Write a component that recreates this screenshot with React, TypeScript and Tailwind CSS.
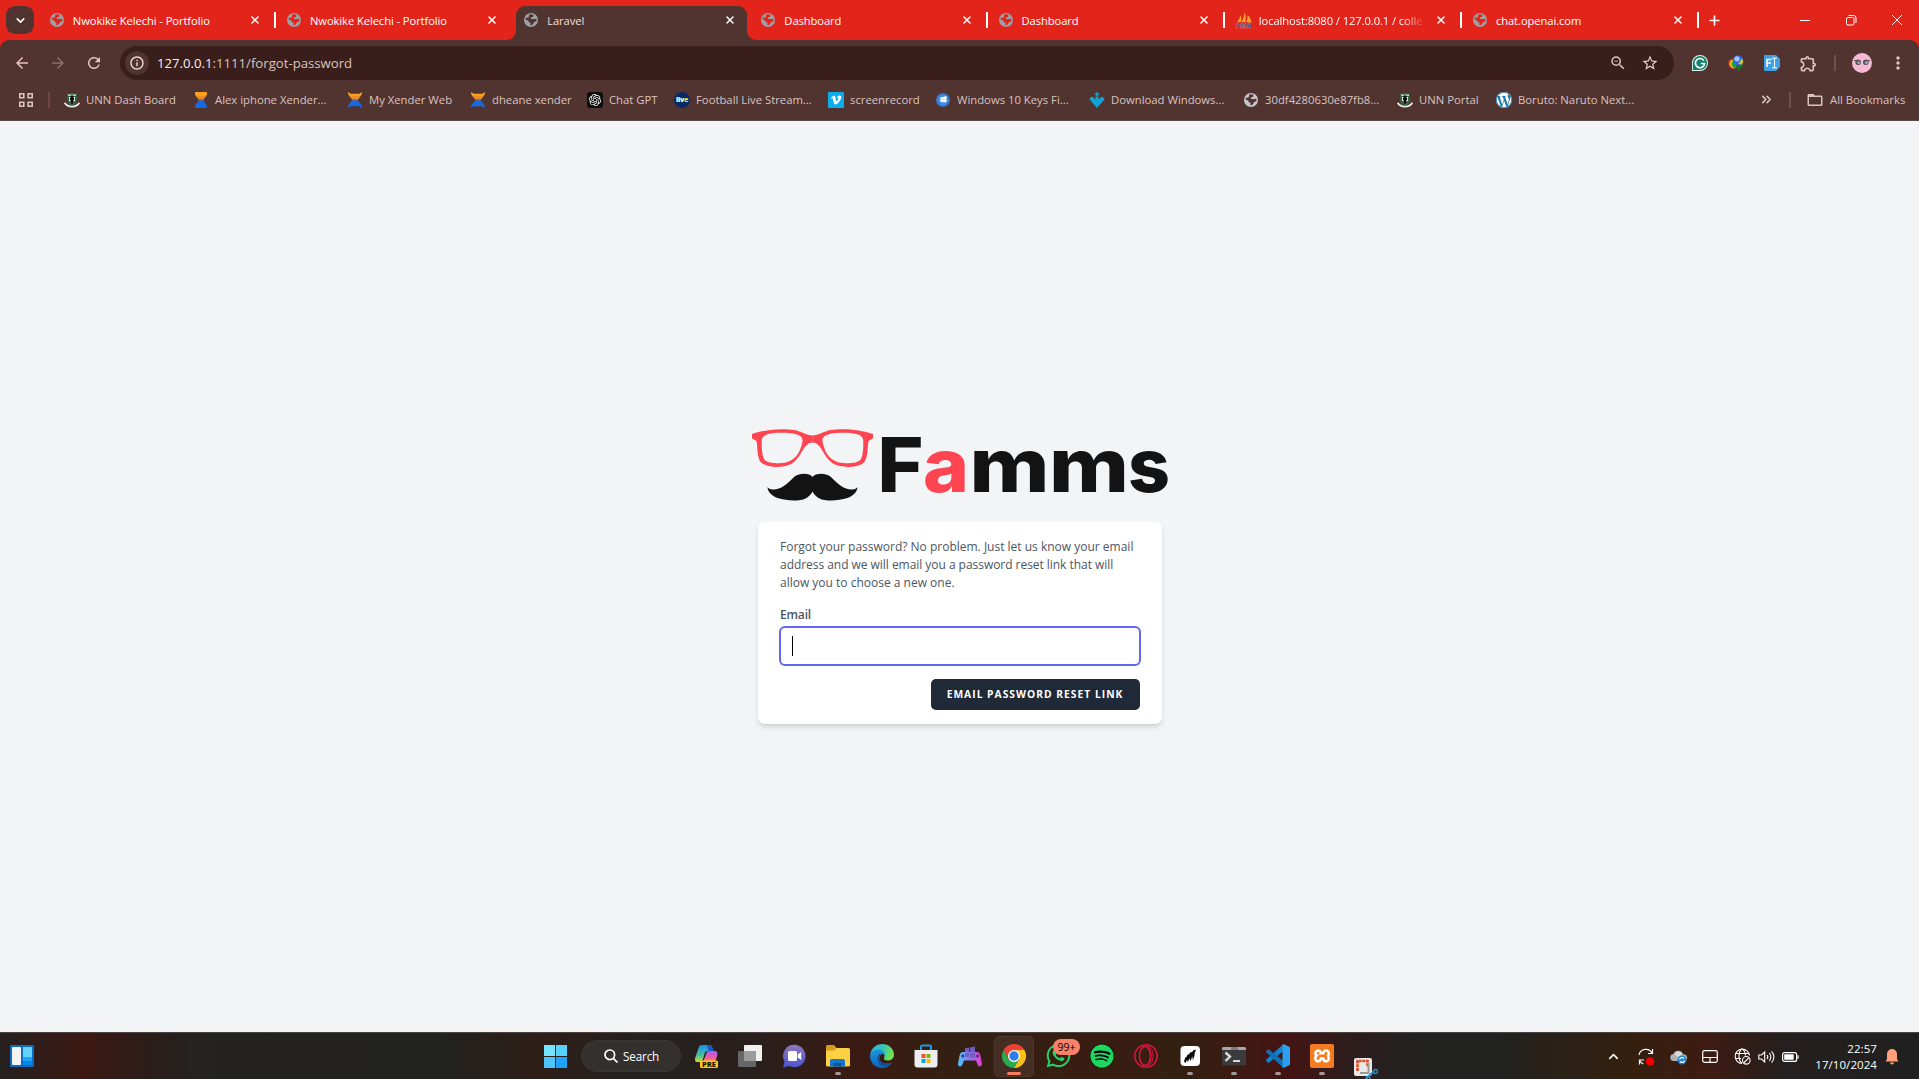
import React from "react";
import {
  MdArrowBack,
  MdArrowForward,
  MdRefresh,
  MdInfoOutline,
  MdStarOutline,
  MdZoomOut,
  MdOutlineExtension,
  MdMoreVert,
  MdFolderOpen,
} from "react-icons/md";
import { SiOpenai, SiXampp, SiWordpress } from "react-icons/si";
import { FaWhatsapp, FaSpotify, FaVimeoV, FaWindows } from "react-icons/fa";
import { ChevronDown, ChevronUp, ChevronsRight, X, Plus } from "lucide-react";

/* ---------- favicons ---------- */

function Globe({ land, fill = "#9aa0a6" }: { land: string; fill?: string }) {
  return (
    <svg viewBox="0 0 14 14" className="size-[14px] shrink-0">
      <circle cx="7" cy="7" r="7" fill={fill} />
      <path
        d="M5.2 1.4 8.3 1.2 9.6 2.4 8.9 3.9 6.9 4.5 6.6 5.6 8.8 6.3 12.3 5.7 12.5 8.2 10.4 8.7 9.3 10.6 7.3 12.4 6.2 11.6 6.6 9.8 4.6 8.9 4.3 7.4 1.6 6.4 2.1 4.3 3.9 4.9 5 3.6Z"
        fill={land}
      />
      <path d="M6.6 4.8 9.6 4 11.6 4.3 10.6 5.4 8.4 5.3Z" fill={fill} />
    </svg>
  );
}

function Crest() {
  return (
    <svg viewBox="0 0 16 16" className="size-4">
      <path d="M3.2 1.500h9.600v6.500c0 3-2 4.500-4.800 5.500-2.800-1-4.800-2.500-4.800-5.500z" fill="#2f6b45" />
      <path d="M4 2.500h8v1.500H4z" fill="#c9d6cb" />
      <path d="M5 5h2l1 1 1-1h2v4H9.800v2H6.200V9H5z" fill="#f0f0f0" />
      <path d="M6.500 3.500h3v2.200l1 1.300-1.200 1.200.5 2.300L8 12l-1.800-1.500.5-2.300L5.500 7l1-1.300z" fill="#0c0c0c" />
      <path d="M.6 10.800c1.800 2.900 4 3.800 7.400 3.800s5.600-.9 7.400-3.800" fill="none" stroke="#e9ece9" strokeWidth="1.700" />
    </svg>
  );
}

function Hourglass({ tail = false }: { tail?: boolean }) {
  return (
    <svg viewBox="0 0 16 16" className="size-4">
      <path d={tail ? "M.8 0 4 1.800h8L15.200 0c-.2 3.600-3 6-5 8H6C4 6 1 3.600.8 0z" : "M2 0h12v2.600L10 8H6L2 2.600z"} fill="#f9a11b" />
      <path d="M3 4h10L9.800 8H6.200z" fill="#e98a2b" />
      <path d={tail ? "M6 8h4c2 2 5 4.400 5.200 8L12 14.200H4L.8 16C1 12.400 4 10 6 8z" : "M6 8h4l4 5.400V16H2v-2.600z"} fill="#1668e3" />
      <path d="M6.200 7.200h3.600L11 9.600H5z" fill="#4b6aa5" />
    </svg>
  );
}

function LiveBadge() {
  return (
    <span className="flex size-4 items-center justify-center rounded-full bg-[#0a2a66] font-['Open_Sans'] text-[7px] font-extrabold leading-none tracking-[-0.3px] text-white">
      liv<span className="text-[#d8e04a]">e</span>
    </span>
  );
}

function PmaIcon() {
  return (
    <svg viewBox="0 0 16 16" className="size-4 shrink-0 overflow-visible">
      <path d="M1 10C3 8 4 5 4.500 3c1 2 1 5 .5 7zM5.500 10C7.500 7 8 4 8.500 0c1.500 3 1.500 7 .8 10zM10 10c1.300-2 1.500-4 1.700-7C14 5 15 8 15.500 10.500z" fill="#f7a52c" />
      <text x="0" y="15.600" textLength="15.500" lengthAdjust="spacingAndGlyphs" fontFamily="Open Sans, sans-serif" fontWeight="800" fontStyle="italic" fontSize="6.500" fill="#3b3f77" stroke="#c9a0a8" strokeWidth=".3">PMA</text>
    </svg>
  );
}

function DownArrows() {
  return (
    <svg viewBox="0 0 16 16" className="size-4" fill="#12a4d4">
      <path d="M8 0 10.300 2.300 8 4.600 5.700 2.300z" />
      <path d="M6.500 4.500h3v3l2-2 1.700-1 2.600 2.500L8 16 .2 7 2.800 4.500l1.700 1 2 2z" />
    </svg>
  );
}

/* ---------- tab strip ---------- */

type TabInfo = { title: string; active?: boolean; sep?: boolean; pma?: boolean };

const tabs: TabInfo[] = [
  { title: "Nwokike Kelechi - Portfolio", sep: true },
  { title: "Nwokike Kelechi - Portfolio" },
  { title: "Laravel", active: true },
  { title: "Dashboard", sep: true },
  { title: "Dashboard", sep: true },
  { title: "localhost:8080 / 127.0.0.1 / colle", sep: true, pma: true },
  { title: "chat.openai.com", sep: true },
];

function Tab({ tab }: { tab: TabInfo }) {
  return (
    <div className="relative flex h-10 w-[237.2px] shrink-0 items-center pl-[10.800px] pr-[15px]">
      {tab.active && (
        <div className="absolute bottom-0 left-[2.500px] right-[3.500px] top-[6px] rounded-t-[9px] bg-[#51332f]">
          <svg viewBox="0 0 10 10" className="absolute -left-[10px] bottom-0 size-[10px]">
            <path d="M10 0v10H0C6 10 10 6 10 0z" fill="#51332f" />
          </svg>
          <svg viewBox="0 0 10 10" className="absolute -right-[10px] bottom-0 size-[10px]">
            <path d="M0 0v10h10C4 10 0 6 0 0z" fill="#51332f" />
          </svg>
        </div>
      )}
      <div className="relative flex w-full items-center">
        {tab.pma ? <PmaIcon /> : <Globe land={tab.active ? "#51332f" : "#e3241b"} />}
        <span
          className={`${tab.pma ? "ml-[7px] w-[168px] [mask-image:linear-gradient(90deg,#000_86%,transparent_99%)]" : "ml-[9px] w-[166px]"} mt-[1px] whitespace-nowrap text-[11.2px] leading-4 tracking-[-0.08px] ${tab.active ? "text-[#f3dedb]" : "text-white"}`}
        >
          {tab.title}
        </span>
        <X className="ml-auto size-[12px] shrink-0 text-white" strokeWidth={3} />
      </div>
      {tab.sep && <div className="absolute right-0 top-3 h-4 w-[2px] bg-white" />}
    </div>
  );
}

function TabStrip() {
  return (
    <div className="flex h-10 bg-[#e3241b]">
      <div className="flex w-[39px] shrink-0 items-center pl-[6px]">
        <div className="flex size-7 items-center justify-center rounded-[9px] bg-[#51332f]">
          <ChevronDown className="size-[13px] text-white" strokeWidth={3} />
        </div>
      </div>
      {tabs.map((t, i) => (
        <Tab key={i} tab={t} />
      ))}
      <div className="flex flex-1 items-center pl-[8px]">
        <Plus className="size-[15px] text-white" strokeWidth={2.600} />
      </div>
      <div className="flex items-center gap-[36px] pr-[17px] text-white">
        <div className="h-px w-[10px] bg-white" />
        <svg viewBox="0 0 10 10" className="size-[10px] overflow-visible" fill="none" stroke="currentColor">
          <rect x=".5" y="2.500" width="7.500" height="7.500" rx="1.500" />
          <path d="M2.500.5h5a2.500 2.500 0 0 1 2.500 2.500v5" />
        </svg>
        <svg viewBox="0 0 10 10" className="size-[10px]" stroke="currentColor">
          <path d="M0 0 10 10M10 0 0 10" />
        </svg>
      </div>
    </div>
  );
}

/* ---------- toolbar ---------- */

function Toolbar() {
  return (
    <div className="bg-[#e3241b]">
      <div className="flex h-[46px] items-center rounded-t-[9px] bg-[#51332f] text-[#e7c3bd]">
        <div className="flex w-[120px] items-center pl-[13px]">
          <MdArrowBack className="size-[18px]" />
          <MdArrowForward className="ml-[18px] size-[18px] text-[#8f6f6a]" />
          <MdRefresh className="ml-[18px] size-[18px]" />
        </div>
        <div className="flex h-[34px] w-[1554px] items-center rounded-full bg-[#3a1e1b] pl-[5px] pr-[15px]">
          <div className="flex size-6 items-center justify-center rounded-full bg-[#51332f]">
            <MdInfoOutline className="size-[16px] text-[#f3dedb]" />
          </div>
          <span className="ml-[8px] whitespace-nowrap text-[13.200px] leading-5 tracking-[-0.01px] text-[#d8c3bf]">
            <span className="text-[#fbeeec]">127.0.0.1</span>:1111/forgot-password
          </span>
          <MdZoomOut className="ml-auto size-[18px] text-[#d8c3bf]" />
          <MdStarOutline className="ml-[14px] size-[18px] text-[#e3d0cd]" />
        </div>
        <div className="ml-[18px] flex items-center">
          <svg viewBox="0 0 16 16" className="size-4">
            <path d="M8 0a8 8 0 0 1 0 16H0V8a8 8 0 0 1 8-8z" fill="#e8f4f1" />
            <path d="M8 .9a7.100 7.100 0 0 1 0 14.200H.9V8A7.100 7.100 0 0 1 8 .9z" fill="#0f8268" />
            <path d="M11.800 5.500A4.600 4.600 0 1 0 12.600 8.500H8.800" fill="none" stroke="#fff" strokeWidth="1.700" />
          </svg>
          <svg viewBox="0 0 16 16" className="ml-5 size-4">
            <circle cx="10" cy="5.500" r="5.300" fill="#2f66d8" />
            <circle cx="9" cy="3.800" r="2.600" fill="#9cc6f5" />
            <path d="M.3 9C-.2 5.500 2 3.500 5 3.800 4 7 5 10 8 12.500l-3 1.500C2 13 .6 11.500.3 9z" fill="#e53a28" />
            <path d="M1.800 9.500C1.500 6.500 3 5 5 5c-.3 3 1 5.500 4 7l-3 1.500C3.500 12.500 2.200 11.500 1.800 9.500z" fill="#f2d21f" />
            <path d="M3.500 9.500C3.300 7.500 4 6.500 5 6.200 5.500 9 7 10 9.500 11l-2 2.500C5 12.500 3.800 11.500 3.500 9.500z" fill="#2ba23a" />
            <path d="m7.500 10 8.500-.3L10 16z" fill="#157a1f" />
            <path d="M14 3.500c1.500 2 1.500 4 0 6l-4-.5z" fill="#c9c430" />
          </svg>
          <svg viewBox="0 0 16 16" className="ml-5 size-4">
            <path d="M1 0h11l4 4v8l-4 4H1a1 1 0 0 1-1-1V1a1 1 0 0 1 1-1z" fill="#3f9fe3" />
            <path d="M3 12V4.500h4.500M3 8h4" fill="none" stroke="#fff" strokeWidth="1.500" />
            <path d="M8 3h1.500l1 .8 1-.8H13M8 13h1.500l1-.8 1 .8H13M10.500 3.500v9" fill="none" stroke="#fff" strokeWidth="1.100" />
          </svg>
          <MdOutlineExtension className="ml-[19px] size-[19px]" />
        </div>
        <div className="ml-[16px] h-4 w-[2px] bg-[#6f504b]" />
        <svg viewBox="0 0 20 20" className="ml-4 size-5">
          <circle cx="10" cy="10" r="10" fill="#f7b9d3" />
          <circle cx="6.200" cy="9.300" r="2.800" fill="#53555c" />
          <circle cx="13.800" cy="9.300" r="2.800" fill="#53555c" />
          <circle cx="6.800" cy="9.600" r="1.600" fill="#9a9ca2" />
          <circle cx="14.400" cy="9.600" r="1.600" fill="#9a9ca2" />
          <path d="M2 7.500h3M15 7.500h3" stroke="#53555c" />
        </svg>
        <MdMoreVert className="ml-[16px] size-5" />
      </div>
    </div>
  );
}

/* ---------- bookmarks ---------- */

const bookmarks: { icon: React.ReactNode; label: string; width: string }[] = [
  { icon: <Crest />, label: "UNN Dash Board", width: "w-[129px]" },
  { icon: <Hourglass />, label: "Alex iphone Xender...", width: "w-[154px]" },
  { icon: <Hourglass tail />, label: "My Xender Web", width: "w-[123px]" },
  { icon: <Hourglass tail />, label: "dheane xender", width: "w-[117px]" },
  {
    icon: (
      <span className="flex size-4 items-center justify-center rounded-[3px] bg-[#0d0d0d]">
        <SiOpenai className="size-3 text-white" />
      </span>
    ),
    label: "Chat GPT",
    width: "w-[87px]",
  },
  { icon: <LiveBadge />, label: "Football Live Stream...", width: "w-[154px]" },
  {
    icon: (
      <span className="flex size-4 items-center justify-center rounded-[1px] bg-[#0cadef]">
        <FaVimeoV className="size-[12px] text-white" />
      </span>
    ),
    label: "screenrecord",
    width: "w-[107px]",
  },
  {
    icon: (
      <span className="flex size-[14px] items-center justify-center rounded-full bg-radial from-[#5fb2f5] to-[#1f55b8]">
        <FaWindows className="size-[7px] -skew-y-6 text-white" />
      </span>
    ),
    label: "Windows 10 Keys Fi...",
    width: "w-[154px]",
  },
  { icon: <DownArrows />, label: "Download Windows...", width: "w-[154px]" },
  { icon: <Globe land="#51332f" fill="#c4c7cc" />, label: "30df4280630e87fb8...", width: "w-[154px]" },
  { icon: <Crest />, label: "UNN Portal", width: "w-[99px]" },
  {
    icon: (
      <span className="flex size-4 items-center justify-center rounded-full bg-white">
        <SiWordpress className="size-4 text-[#1b78a8]" />
      </span>
    ),
    label: "Boruto: Naruto Next...",
    width: "w-[140px]",
  },
];

function BookmarksBar() {
  return (
    <div className="flex h-[35px] items-center border-b border-[#5c4a47] bg-[#51332f] pb-[7px] text-[11.300px] leading-4 text-[#d9c4c0]">
      <svg viewBox="0 0 14 14" className="ml-[19px] size-[14px]" fill="none" stroke="#d9c4c0" strokeWidth="1.600">
        <path d="M.8.8h4v4h-4zM9.200.8h4v4h-4zM.8 9.200h4v4h-4zM9.200 9.200h4v4h-4z" />
      </svg>
      <div className="ml-[15px] h-4 w-[2px] bg-[#6f4742]" />
      <div className="ml-[14px] flex flex-1">
        {bookmarks.map((b, i) => (
          <div key={i} className={`flex shrink-0 items-center gap-[6px] whitespace-nowrap ${b.width}`}>
            <span className="flex w-4 shrink-0 justify-center">{b.icon}</span>
            {b.label}
          </div>
        ))}
      </div>
      <ChevronsRight className="mr-[15px] size-[15px]" strokeWidth={2.500} />
      <div className="h-4 w-[2px] bg-[#6f504b]" />
      <MdFolderOpen className="ml-[15px] mr-[6px] size-[18px]" />
      <span className="w-[89px] whitespace-nowrap">All Bookmarks</span>
    </div>
  );
}

/* ---------- page ---------- */

function GlassesHalf() {
  return (
    <path
      fillRule="evenodd"
      d="M0 5C12 .5 30-1 42 1c8 1.300 12 5.500 18.600 5.500v7C52 13.500 51 25 42 33 34 39.500 16 39.500 9 33.500 5 29 5.500 18 4.700 13 4.500 10.500 0 11 0 8.500zM9.700 12c0 8 .3 14 2.300 18 2 3.300 8 4.300 15 4.300 16 0 21.500-11 23.500-22 1-7-9-8.600-21.500-8.600C17 3.700 9.700 5.500 9.700 12z"
    />
  );
}

function FammsLogo() {
  return (
    <svg viewBox="0 0 420 76" className="ml-[4px] h-[76px] w-[420px] overflow-visible">
      <g fill="#ff4452">
        <GlassesHalf />
        <g transform="translate(121 0) scale(-1 1)">
          <GlassesHalf />
        </g>
      </g>
      <path d="M60.500 48c3-4.200 14-4.500 19 .5 7 7 13 12.500 21 12 2.500-.3 4-1 5-2.500 0 5-5 9-10 11-9 3-22 3.500-28 .5-3-1.500-5.500-4-7-7-1.500 3-4 5.500-7 7-6 3-19 2.500-28-.5-5-2-10-6-10-11 1 1.500 2.500 2.200 5 2.500 8 .5 14-5 21-12 5-5 16-4.700 19-.5z" fill="#131313" />
      <g fontFamily="Inter, sans-serif" fontWeight="800" fontSize="75" fill="#131313">
        <text x="125.500" y="62.500" textLength="46" lengthAdjust="spacingAndGlyphs">F</text>
        <text x="171" y="62.500" textLength="46" lengthAdjust="spacingAndGlyphs" fill="#ff4452">a</text>
        <text x="217.500" y="62.500" textLength="80" lengthAdjust="spacingAndGlyphs">m</text>
        <text x="297" y="62.500" textLength="80" lengthAdjust="spacingAndGlyphs">m</text>
        <text x="376" y="62.500" textLength="42" lengthAdjust="spacingAndGlyphs">s</text>
      </g>
    </svg>
  );
}

function ForgotPassword() {
  return (
    <main className="flex flex-1 flex-col items-center bg-[#f3f4f6] pt-[308px]">
      <FammsLogo />
      <div className="mt-[17px] h-[202px] w-[404px] rounded-[7px] bg-white px-[22px] pt-[16px] shadow-[0_4px_6px_-1px_rgba(0,0,0,0.12),0_2px_4px_-2px_rgba(0,0,0,0.12)]">
        <p className="whitespace-nowrap pl-[0.5px] text-[12px] leading-[18px] text-[#4b5563]">
          Forgot your password? No problem. Just let us know your email
          <br />
          <span className="tracking-[-0.04px]">address and we will email you a password reset link that will</span>
          <br />
          allow you to choose a new one.
        </p>
        <label className="mt-[14px] block pl-[0.5px] text-[12px] font-semibold leading-[18px] tracking-[-0.15px] text-[#4b5563]">Email</label>
        <div className="-mx-[1px] mt-[2px] flex h-[40px] w-[362px] items-center rounded-[6px] border-2 border-[#6366f1] bg-white pl-[11px]">
          <div className="h-5 w-px bg-black" />
        </div>
        <div className="mt-[13px] flex justify-end">
          <button className="flex h-[31px] w-[209px] items-center justify-center whitespace-nowrap rounded-[5px] bg-[#1f2937] text-[10.300px] font-bold tracking-[1px] text-white">
            EMAIL PASSWORD RESET LINK
          </button>
        </div>
      </div>
    </main>
  );
}

/* ---------- taskbar ---------- */

function CopilotIcon() {
  return (
    <svg viewBox="0 0 24 24" className="size-6 overflow-visible">
      <defs>
        <linearGradient id="cpA" x1="0" y1="0" x2="0" y2="1">
          <stop offset="0" stopColor="#1c8df0" />
          <stop offset=".6" stopColor="#43c39a" />
          <stop offset="1" stopColor="#d8d33a" />
        </linearGradient>
        <linearGradient id="cpB" x1="0" y1="0" x2="0" y2="1">
          <stop offset="0" stopColor="#a75df0" />
          <stop offset=".6" stopColor="#ee5aa0" />
          <stop offset="1" stopColor="#f79a3c" />
        </linearGradient>
      </defs>
      <path d="M8 1h7c2 0 3 1 3.500 3l1 3H14c-2 0-3 1-3.500 3L9 15c-.5 2-1.500 3-3 3H3.500C1 18 .5 16 1.500 13L4.500 4C5.200 2 6 1 8 1z" fill="url(#cpA)" />
      <path d="M15 7h5.500c3 0 3.500 2 2.600 5l-2 6H9l3.500-9c.5-1.300 1.200-2 2.500-2z" fill="url(#cpB)" />
      <path d="M13 1h2c2 0 3 1 3.500 3l1 3h-5z" fill="#1a55c9" />
      <rect x="6" y="16.500" width="18" height="7.500" rx="1.500" fill="#fbc618" />
      <text x="8" y="22.700" textLength="14" lengthAdjust="spacingAndGlyphs" fontFamily="Open Sans, sans-serif" fontWeight="800" fontSize="6.800" fill="#1b1500">PRE</text>
    </svg>
  );
}

function TaskViewIcon() {
  return (
    <svg viewBox="0 0 24 24" className="size-6">
      <rect x="6" y="1" width="18" height="16" rx="1" fill="#f1f1f1" />
      <rect x="0" y="7" width="18" height="16" rx="1" fill="#666" />
      <rect x="6" y="7" width="12" height="10" fill="#9c9c9c" />
    </svg>
  );
}

function ChatIcon() {
  return (
    <svg viewBox="0 0 24 24" className="size-6">
      <defs>
        <linearGradient id="chA" x1="0" y1="0" x2="0" y2="1">
          <stop offset="0" stopColor="#8f77b8" />
          <stop offset="1" stopColor="#4c54d2" />
        </linearGradient>
      </defs>
      <path d="M12.500.8a11.200 11.200 0 1 1-5.200 21.200L1 23.500l1.500-6A11.200 11.200 0 0 1 12.500.8z" fill="url(#chA)" />
      <rect x="6" y="7" width="9" height="10" rx="1.500" fill="#fff" />
      <path d="m15.700 10.500 3.500-2.500v8l-3.500-2.500z" fill="#fff" />
    </svg>
  );
}

function ExplorerIcon() {
  return (
    <svg viewBox="0 0 24 24" className="size-6">
      <path d="M0 2.500A1.500 1.500 0 0 1 1.500 1H8l2.500 3H22v6H0z" fill="#d99a17" />
      <path d="M0 6.500h8L10.500 4H22.500A1.500 1.500 0 0 1 24 5.500V21a1.500 1.500 0 0 1-1.500 1.500h-21A1.500 1.500 0 0 1 0 21z" fill="#fccf45" />
      <path d="M4 22.500V17a2 2 0 0 1 2-2h11a2 2 0 0 1 2 2v5.500z" fill="#1477c9" />
      <path d="M7.500 19h8v3.500h-8z" fill="#0c559a" />
    </svg>
  );
}

function EdgeIcon() {
  return (
    <svg viewBox="0 0 24 24" className="size-6">
      <defs>
        <linearGradient id="edA" x1="0" y1="0" x2="1" y2=".3">
          <stop offset="0" stopColor="#2aa9e8" />
          <stop offset=".6" stopColor="#36c9b0" />
          <stop offset="1" stopColor="#70e04e" />
        </linearGradient>
        <linearGradient id="edB" x1="0" y1="0" x2="0" y2="1">
          <stop offset="0" stopColor="#1a95dd" />
          <stop offset="1" stopColor="#1263b8" />
        </linearGradient>
      </defs>
      <path d="M.3 10.500C1 4.500 6 0 12 0c7 0 12 5 12 10.500 0 4-3 6-6.500 6-2.500 0-4-1-3.500-2.500 1-1.500.8-5-3-6.200C7 6.600 2 7.500.3 10.500z" fill="url(#edA)" />
      <path d="M0 12c0-3.500 4-6.500 8.500-6.500 4 0 6.500 2.700 6.500 5.500-2-2-5-1-5.500 2.500-.6 4.500 4.500 7.500 12.500 5-2 3.500-5.500 5.500-10 5.500C5 24 0 18.500 0 12z" fill="url(#edB)" />
      <path d="M9.500 9.800C6 13 7.500 20 13 22.500c3.500 0 7-1.500 9-4-8 2.500-13.100-.5-12.500-5 .2-1.500.8-2.600 1.800-3.200z" fill="#0f4f93" />
    </svg>
  );
}

function StoreIcon() {
  return (
    <svg viewBox="0 0 24 24" className="size-6">
      <path d="M7 7V2.800C7 2 7.500 1.500 8.300 1.500h7.400c.8 0 1.300.5 1.300 1.300V7" fill="none" stroke="#1f9be6" strokeWidth="2" />
      <path d="M.5 6h23v14.500a3 3 0 0 1-3 3h-17a3 3 0 0 1-3-3z" fill="#eeeef0" />
      <path d="M7.500 10h4v4h-4z" fill="#f05022" />
      <path d="M12.500 10h4v4h-4z" fill="#7cba00" />
      <path d="M7.500 15h4v4h-4z" fill="#00a3ef" />
      <path d="M12.500 15h4v4h-4z" fill="#ffb800" />
    </svg>
  );
}

function GameIcon() {
  return (
    <svg viewBox="0 0 24 24" className="size-6">
      <defs>
        <linearGradient id="gmA" x1="0" y1="0" x2="1" y2="0">
          <stop offset="0" stopColor="#4cc6ff" />
          <stop offset=".45" stopColor="#8a7cf0" />
          <stop offset="1" stopColor="#e43bd0" />
        </linearGradient>
      </defs>
      <path d="M5 8h14c2 0 3 1.500 3.500 4L24 20c0 2.500-3.500 3.500-4.500.5L18 16.500H6L4.500 20.500C3.500 23.500 0 22.500 0 20l1.500-8C2 9.500 3 8 5 8z" fill="url(#gmA)" />
      <path d="M7 4.300 11.300 3.500V8H7zM12 3.400 17 2.500V8h-5zM7 8.700h4.300v4.500L7 12.700zM12 8.700h5v5.300l-5-.7z" fill="#6f5fc0" />
      <circle cx="4.800" cy="12" r="1.500" fill="#3c3270" />
      <circle cx="19.500" cy="12" r="1.500" fill="#5c2a72" />
    </svg>
  );
}

function ChromeIcon() {
  return (
    <svg viewBox="0 0 24 24" className="size-6">
      <path d="M12 6h10.400A12 12 0 0 1 12 24l5.200-9z" fill="#fbc116" />
      <path d="M1.600 6A12 12 0 0 0 12 24l5.200-9L12 12 6.800 15z" fill="#2da94f" />
      <path d="M1.600 6 6.800 15 12 6h10.400A12 12 0 0 0 1.600 6z" fill="#ea4335" />
      <circle cx="12" cy="12" r="6" fill="#fff" />
      <circle cx="12" cy="12" r="4.700" fill="#2f7de9" />
    </svg>
  );
}

function OperaIcon() {
  return (
    <svg viewBox="0 0 24 24" className="size-6" fill="none" stroke="#d6163f">
      <circle cx="12" cy="12" r="11.200" strokeWidth="1.500" />
      <ellipse cx="11" cy="12" rx="5.500" ry="9.500" strokeWidth="1.500" />
      <path d="M9 2.500c8-1 10 4 10 9.500s-2 10.500-10 9.500M13 2.500c3 2.500 4 6 4 9.500s-1 7-4 9.500" strokeWidth="1" />
    </svg>
  );
}

function BrushIcon() {
  return (
    <svg viewBox="0 0 24 24" className="size-6">
      <rect x="2.500" y="2" width="19.500" height="20" rx="4" fill="#fff" />
      <path d="M6 17.500c1-4 2-5 2.500-4.200.5-2.300 1.800-3.500 2.500-2.700 1-2.500 2.300-3 2.800-2 1-2 3.200-3.500 4.200-2.300-1 1-1.500 3-1.500 5.500l-1.700 4.500-.5-4-1.800 5-1-3-1.700 4-.8-2.600L7.500 19z" fill="#0b0b0b" />
    </svg>
  );
}

function TerminalIcon() {
  return (
    <svg viewBox="0 0 24 24" className="size-6">
      <rect x="0" y="3" width="24" height="18.500" rx="1.500" fill="#3b3b3d" />
      <path d="M0 6V4.500A1.500 1.500 0 0 1 1.500 3h21A1.500 1.500 0 0 1 24 4.500V6z" fill="#a7a7a7" />
      <path d="M9 3h7v3H9z" fill="#7d7d7d" />
      <path d="m3.500 8.500 4.500 4-4.500 4.500" fill="none" stroke="#d9d9d9" strokeWidth="2.400" />
      <path d="M11 17h7" stroke="#fff" strokeWidth="1.600" />
    </svg>
  );
}

function CodeIcon() {
  return (
    <svg viewBox="0 0 24 24" className="size-6">
      <path d="M17.500 0v7L3.200 18.400a1 1 0 0 1-1.300 0L.4 17a1 1 0 0 1 0-1.500z" fill="#1182cd" />
      <path d="M17.500 24v-7L3.200 5.600a1 1 0 0 0-1.300 0L.4 7a1 1 0 0 0 0 1.500z" fill="#0f6fb8" />
      <path d="m17.500 0 5.600 2.700c.6.300.9.800.9 1.400v15.800c0 .6-.3 1.100-.9 1.400L17.500 24c-.6-.3-1-.8-1-1.400V1.400c0-.6.4-1.100 1-1.400z" fill="#2ba0ee" />
    </svg>
  );
}

function SnipIcon() {
  return (
    <svg viewBox="0 0 24 24" className="size-6">
      <rect x="0" y="2" width="18" height="18" rx="2" fill="#e9e9ea" />
      <path d="M3.500 15V5h10v6" fill="none" stroke="#dc4a1e" strokeWidth="2.600" strokeDasharray="3 .7" />
      <path d="M14.500 7v10H6" fill="none" stroke="#9a9a9a" strokeWidth="2" />
      <path d="m12 23 6-6 2-2" stroke="#1c8fd8" strokeWidth="1.800" />
      <circle cx="21.500" cy="15.500" r="2" fill="none" stroke="#1c8fd8" strokeWidth="1.400" />
      <circle cx="14" cy="22.500" r="2" fill="none" stroke="#1c8fd8" strokeWidth="1.400" />
    </svg>
  );
}

const apps: { icon: React.ReactNode; dot?: boolean; active?: boolean; badge?: string; low?: boolean }[] = [
  { icon: <CopilotIcon /> },
  { icon: <TaskViewIcon /> },
  { icon: <ChatIcon /> },
  { icon: <ExplorerIcon />, dot: true },
  { icon: <EdgeIcon /> },
  { icon: <StoreIcon /> },
  { icon: <GameIcon /> },
  { icon: <ChromeIcon />, active: true },
  { icon: <FaWhatsapp className="size-[27px] text-[#25d366]" />, badge: "99+" },
  {
    icon: (
      <span className="flex size-6 items-center justify-center rounded-full bg-black">
        <FaSpotify className="size-6 text-[#1ed760]" />
      </span>
    ),
  },
  { icon: <OperaIcon /> },
  { icon: <BrushIcon />, dot: true },
  { icon: <TerminalIcon />, dot: true },
  { icon: <CodeIcon />, dot: true },
  {
    icon: (
      <span className="flex size-6 items-center justify-center rounded-[2px] border-2 border-[#f47b20] bg-white">
        <SiXampp className="size-[22px] shrink-0 text-[#f47b20]" />
      </span>
    ),
    dot: true,
  },
  { icon: <SnipIcon />, low: true },
];

function Tray() {
  return (
    <div className="ml-auto flex items-center pt-[1px] text-white">
      <ChevronUp className="size-[15px]" strokeWidth={2.500} />
      <svg viewBox="0 0 18 18" className="ml-[16px] size-[18px]" fill="none" stroke="currentColor" strokeWidth="1.200">
        <path d="M2 7a7 7 0 0 1 13-2M15.500 1v4.500H11M2.500 16.500V12H7M2.500 12.500a7 7 0 0 0 4 3.500" />
        <circle cx="13" cy="13.500" r="4.200" fill="#f80000" stroke="none" />
      </svg>
      <svg viewBox="0 0 17 16" className="ml-[15px] h-4 w-[17px]">
        <path d="M4 12a3.500 3.500 0 0 1-.5-7A5 5 0 0 1 13 5.500a3.300 3.300 0 0 1 1.500 6.500z" fill="#aeb1b5" />
        <path d="M4 5a5 5 0 0 1 9 .5L8 8z" fill="#d8d9db" />
        <circle cx="12" cy="11" r="4.500" fill="#1e7fd0" />
        <path d="M9.500 10.500a2.600 2.600 0 0 1 4.500-1M14.500 11.500a2.600 2.600 0 0 1-4.500 1" fill="none" stroke="#fff" strokeWidth="1.200" />
      </svg>
      <svg viewBox="0 0 16 13" className="ml-[15px] h-[13px] w-4" fill="none" stroke="currentColor" strokeWidth="1.200">
        <rect x=".7" y=".7" width="14.600" height="11.600" rx="1.800" />
        <path d="M.7 7.500h14.600M8 7.500v5" />
      </svg>
      <svg viewBox="0 0 17 17" className="ml-[16px] size-[17px]" fill="none" stroke="currentColor" strokeWidth="1.100">
        <path d="M8 15.500a7.200 7.200 0 1 1 7.500-8M8 15.500C4 12 4 4 8 .8 10.500 2.500 11.400 5 11.500 7.500M1 5.500h13.500M1 10.500h6" />
        <circle cx="12.300" cy="12.300" r="3.800" />
        <path d="m9.600 15 5.400-5.400" />
      </svg>
      <svg viewBox="0 0 17 14" className="ml-[7px] h-[14px] w-[17px]" fill="none" stroke="currentColor" strokeWidth="1.100">
        <path d="M.8 5v4h2.700l3.200 3V2L3.500 5zM9 5a3 3 0 0 1 0 4M11.300 3.200a5.500 5.500 0 0 1 0 7.600M13.500 1.300a8 8 0 0 1 0 11.400" />
      </svg>
      <svg viewBox="0 0 17 10" className="ml-[7px] h-[10px] w-[17px]">
        <rect x=".6" y=".6" width="14" height="8.800" rx="2" fill="none" stroke="#fff" strokeWidth="1.200" />
        <rect x="2.200" y="2.200" width="9.500" height="5.600" rx=".6" fill="#fff" />
        <path d="M16 3.300v3.400" stroke="#fff" strokeWidth="1.200" />
      </svg>
      <div className="ml-[13px] w-[65px] whitespace-nowrap text-right text-[11.500px] leading-4 tracking-[0.07px]">
        22:57
        <br />
        17/10/2024
      </div>
      <svg viewBox="0 0 14 16" className="ml-[8px] mr-[20px] h-4 w-[14px]" fill="#ff9f7c">
        <path d="M7 0a5 5 0 0 1 5 5v5l1.500 2.500H.5L2 10V5a5 5 0 0 1 5-5zM5 13.500h4a2 2 0 0 1-4 0z" />
      </svg>
    </div>
  );
}

function Taskbar() {
  return (
    <footer className="flex h-[47px] items-center border-t border-[#4a4543] bg-[linear-gradient(90deg,#25211f_0px,#3d1812_85px,#2f1b17_130px,#25221f_190px,#22221f_440px,#2e1e18_540px,#24211f_640px,#2a1f1c_760px,#3b1a12_860px,#332013_970px,#3a1c12_1100px,#332010_1180px,#451413_1285px,#2e1d1c_1345px,#232221_1410px,#222220_1500px,#33200f_1620px,#3e1b12_1710px,#251f1e_1780px,#202020_1919px)]">
      <svg viewBox="0 0 24 22" className="ml-[10px] h-[22px] w-6">
        <rect width="24" height="22" rx="1" fill="#0d6cc4" />
        <rect x="2" y="2" width="9" height="18" rx="1" fill="#f4f4f4" />
        <path d="M13 2h9v10h-9z" fill="#63d3ff" />
        <path d="M13 12h9v4h-9z" fill="#1fa5f7" />
        <path d="M13 16h9v4h-9z" fill="#0586ea" />
      </svg>
      <div className="ml-[510px] mt-[1px] grid grid-cols-2 gap-px">
        <div className="size-[11px] bg-[#74e4ff]" />
        <div className="size-[11px] bg-[#56d0fd]" />
        <div className="size-[11px] bg-[#4cc4fb]" />
        <div className="size-[11px] bg-[#1ca5f8]" />
      </div>
      <div className="ml-[14px] flex h-8 w-[100px] items-center rounded-full border border-[#3a3634] bg-[#33302e] pl-[22px] text-[11.700px] text-white">
        <svg viewBox="0 0 14 14" className="size-[14px]" fill="none" stroke="currentColor" strokeWidth="1.700">
          <circle cx="5.800" cy="5.800" r="4.800" />
          <path d="m9.300 9.300 4.200 4.200" />
        </svg>
        <span className="ml-[5px] mt-[2px] tracking-[-0.15px]">Search</span>
      </div>
      <div className="ml-[3px] flex">
        {apps.map((a, i) => (
          <div key={i} className="relative flex h-[46px] w-[44px] items-center justify-center pb-px">
            {a.active && <div className="absolute inset-x-[2px] bottom-[2px] top-[3px] rounded-[5px] border border-[#4d3830] bg-[#452d24]" />}
            <div className={`relative ${a.low ? "top-[12px]" : "top-0"}`}>{a.icon}</div>
            {a.badge && (
              <div className="absolute right-0 top-[6px] flex h-4 w-[27px] items-center justify-center rounded-full bg-[#fb8268] text-[10.500px] leading-none text-black">
                {a.badge}
              </div>
            )}
            {a.dot && <div className="absolute bottom-[4px] h-[3px] w-[6px] rounded-full bg-[#a09a98]" />}
            {a.active && <div className="absolute bottom-[4px] h-[3px] w-[14px] rounded-full bg-[#f87e62]" />}
          </div>
        ))}
      </div>
      <Tray />
    </footer>
  );
}

export default function App() {
  return (
    <div className="flex h-[1079px] w-[1919px] flex-col overflow-hidden font-['Open_Sans',sans-serif]">
      <TabStrip />
      <Toolbar />
      <BookmarksBar />
      <ForgotPassword />
      <Taskbar />
    </div>
  );
}
